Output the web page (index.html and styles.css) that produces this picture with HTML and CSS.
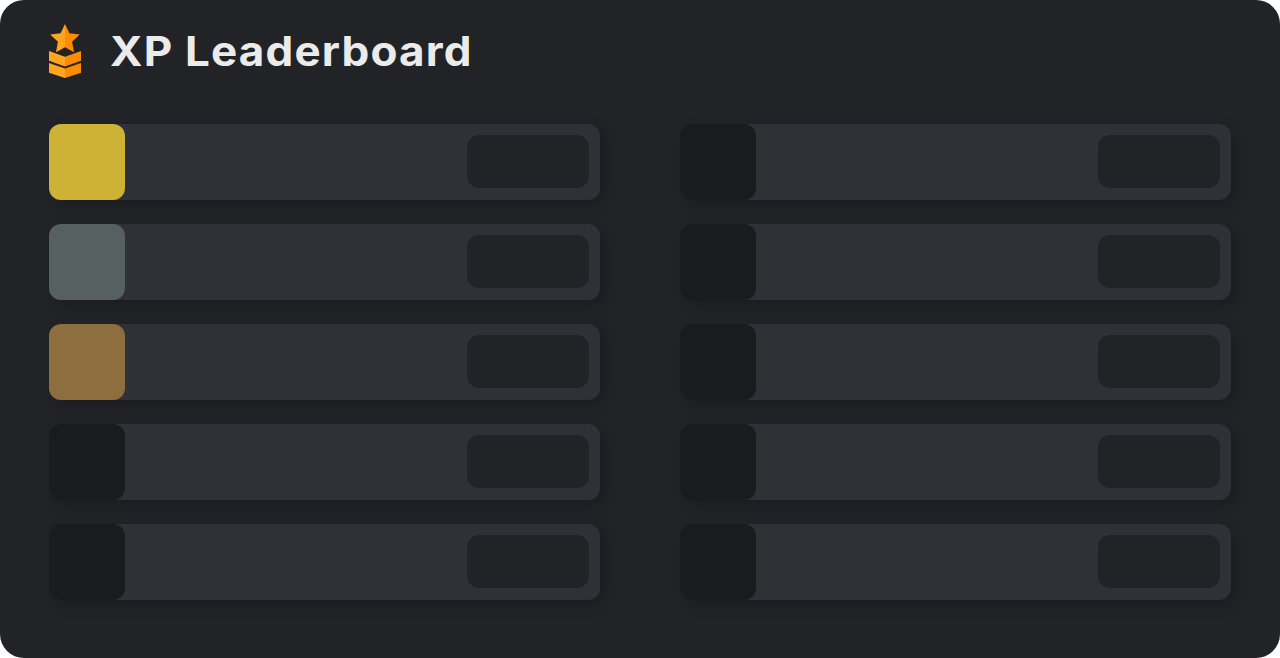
FILE: index.html
```html
<!DOCTYPE html>
<html lang="en">
<head>
<meta charset="utf-8">
<title>XP Leaderboard</title>
<link rel="stylesheet" href="styles.css">
</head>
<body>
<main class="card">
  <header class="header">
    <svg class="rank-icon" viewBox="0 0 32 54" aria-hidden="true">
      <path fill="#ffa51f" d="M16 0 11.6 9.3 1.3 10.6 8.9 17.8 7 28.3 16 23.3ZM0 27 16 32.7V42.5L0 36.8ZM0 39 16 44.4V54L0 48.8Z"/>
      <path fill="#ff8b00" d="M16 0 20.4 9.3 30.7 10.6 23.1 17.8 25 28.3 16 23.3ZM32 27 16 32.7V42.5L32 36.8ZM32 39 16 44.4V54L32 48.8Z"/>
    </svg>
    <h1 class="title">XP Leaderboard</h1>
  </header>
  <section class="board">
    <div class="row"><div class="rank gold"></div><div class="score"></div></div>
    <div class="row"><div class="rank silver"></div><div class="score"></div></div>
    <div class="row"><div class="rank bronze"></div><div class="score"></div></div>
    <div class="row"><div class="rank"></div><div class="score"></div></div>
    <div class="row"><div class="rank"></div><div class="score"></div></div>
    <div class="row"><div class="rank"></div><div class="score"></div></div>
    <div class="row"><div class="rank"></div><div class="score"></div></div>
    <div class="row"><div class="rank"></div><div class="score"></div></div>
    <div class="row"><div class="rank"></div><div class="score"></div></div>
    <div class="row"><div class="rank"></div><div class="score"></div></div>
  </section>
</main>
</body>
</html>
```
FILE: styles.css
```css
* {
  box-sizing: border-box;
}

body {
  margin: 0;
  background: #fff;
}

.card {
  width: 1280px;
  height: 658px;
  padding: 24px 49px 0;
  border-radius: 24px;
  background: #222327;
}

.header {
  display: flex;
  align-items: center;
  gap: 29px;
  height: 54px;
}

.rank-icon {
  flex: none;
  width: 32px;
  height: 54px;
}

.title {
  margin: 0;
  color: #ebebeb;
  font: 700 41px/54px Inter, sans-serif;
  letter-spacing: 1.1px;
  white-space: nowrap;
  transform: scaleX(1.073);
  transform-origin: left center;
}

.board {
  display: grid;
  grid-template-columns: repeat(2, 551px);
  grid-template-rows: repeat(5, 76px);
  grid-auto-flow: column;
  gap: 24px 80px;
  margin-top: 46px;
}

.row {
  display: flex;
  align-items: flex-start;
  justify-content: space-between;
  padding-right: 11px;
  border-radius: 12px;
  background: #303136;
  box-shadow: 5px 5px 14px rgba(0, 0, 0, 0.2);
}

.rank {
  width: 76px;
  height: 76px;
  border-radius: 12px;
  background: #1a1b1d;
}

.gold {
  background: #cdb236;
}

.silver {
  background: #576061;
}

.bronze {
  background: #8d6e3f;
}

.score {
  width: 122px;
  height: 53px;
  margin-top: 11px;
  border-radius: 12px;
  background: #222327;
}
```
